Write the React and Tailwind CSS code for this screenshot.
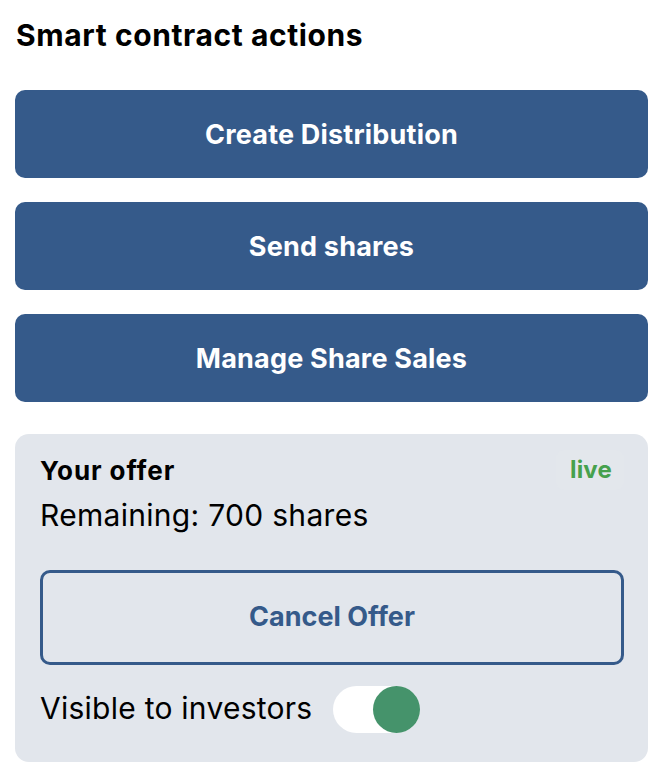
export default function App() {
  const font = { fontFamily: 'Inter, "Liberation Sans", sans-serif' };
  return (
    <div className="w-[668px] h-[780px] bg-white pl-[15px] pr-[20px] pt-[15px]" style={font}>
      <h1 className="text-[30px] leading-[40px] font-bold text-black tracking-[0.6px] pl-[1px]">Smart contract actions</h1>
      <div className="mt-[35px] flex flex-col gap-[24px]">
        {["Create Distribution", "Send shares", "Manage Share Sales"].map((t) => (
          <button key={t} className="h-[88px] w-full rounded-[10px] bg-[#355a8a] pt-[2px] text-white text-[27px] font-bold tracking-[0.2px]">
            {t}
          </button>
        ))}
      </div>
      <div className="mt-[32px] rounded-[14px] bg-[#e2e6ec] pl-[25px] pr-[24px] pt-[16px] pb-[29px]">
        <div className="flex items-center justify-between h-[40px]">
          <span className="text-[26px] font-bold text-black tracking-[0.9px]">Your offer</span>
          <span className="h-[40px] pl-[14px] pr-[12px] flex items-center rounded-[8px] bg-[#e3e7ec] text-[#46a14d] text-[24px] font-bold tracking-[0.2px]">live</span>
        </div>
        <div className="mt-[7px] text-[30px] leading-[36px] text-black tracking-[0.3px]">Remaining: 700 shares</div>
        <button className="mt-[37px] h-[95px] w-full rounded-[10px] border-[3px] border-[#355a8a] text-[#355a8a] text-[27px] font-bold">
          Cancel Offer
        </button>
        <div className="mt-[21px] flex items-center gap-[21px]">
          <span className="text-[30px] leading-[36px] text-black tracking-[0.25px] -translate-y-[2px]">Visible to investors</span>
          <span className="relative inline-block w-[87px] h-[47px] rounded-full bg-white">
            <span className="absolute right-0 top-0 w-[47px] h-[47px] rounded-full bg-[#45936b]"></span>
          </span>
        </div>
      </div>
    </div>
  );
}
